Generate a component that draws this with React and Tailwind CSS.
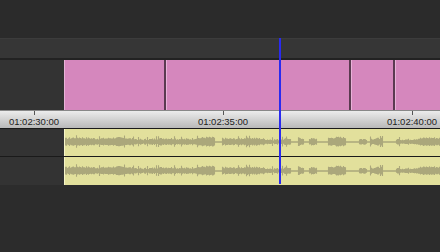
import React from 'react';

// quiet stretches of the clip, in px from the clip's left edge
const quiet = [
  [150, 156], [226, 232], [239, 243], [252, 262], [281, 293], [302, 304], [318, 330],
];

function wave(seed, n) {
  const out = [];
  let s = seed;
  for (let i = 0; i < n; i++) {
    s = (s * 9301 + 49297) % 233280;
    const r = s / 233280;
    const env = 2.6 + Math.sin(i / 7) * 0.6 + Math.sin(i / 19) * 0.5;
    const q = quiet.some(([a, b]) => i >= a && i <= b);
    out.push(q ? 0.8 : env + r * 1.8 + (r > 0.93 ? 1.5 : 0));
  }
  return out;
}

function Waveform({ seed }) {
  const bars = wave(seed, 376);
  const d = bars.map((h, i) => `M${i + 0.5} ${13 - h}V${13 + h * 0.85}`).join('');
  return (
    <svg width="376" height="27" className="block">
      <path d={d} stroke="#aba77b" strokeWidth="1.1" />
    </svg>
  );
}

function Clip({ w, last }) {
  return (
    <div
      className={`h-full bg-[#d587bd] border-l border-[#e8b2d8] ${last ? 'flex-1' : 'border-r-2 border-r-[#5a3a50]'}`}
      style={last ? undefined : { width: w }}
    />
  );
}

function AudioTrack({ seed, border }) {
  return (
    <div className={`flex h-[28px] ${border ? 'border-b border-[#1a1a1a]' : ''}`}>
      <div className="w-[64px] bg-[#333333]" />
      <div className="flex-1 bg-[#e2e09c] border-l border-[#f6f5c8] flex items-center overflow-hidden">
        <Waveform seed={seed} />
      </div>
    </div>
  );
}

export default function App() {
  const labels = [
    { x: 34, t: '01:02:30:00' },
    { x: 223, t: '01:02:35:00' },
    { x: 412, t: '01:02:40:00' },
  ];
  return (
    <div className="relative w-[440px] h-[252px] bg-[#2c2c2c] overflow-hidden font-['Liberation_Sans',Arial,sans-serif]">
      <div className="h-[38px] bg-[#2b2b2b]" />
      <div className="h-[20px] bg-[#363636] border-t border-[#3c3c3c]" />
      <div className="h-[2px] bg-[#222222]" />
      <div className="flex h-[50px]">
        <div className="w-[64px] bg-[#333333]" />
        <div className="flex flex-1">
          <Clip w={102} />
          <Clip w={185} />
          <Clip w={44} />
          <Clip last />
        </div>
      </div>
      <div className="relative h-[18px] bg-gradient-to-b from-[#ececec] to-[#b9b9b9] border-t border-[#888]">
        {labels.map((l) => (
          <React.Fragment key={l.t}>
            <div className="absolute top-0 w-px h-[4px] bg-[#555]" style={{ left: l.x }} />
            <span
              className="absolute top-[5px] text-[9.5px] leading-[11px] text-[#222] -translate-x-1/2"
              style={{ left: l.x }}
            >
              {l.t}
            </span>
          </React.Fragment>
        ))}
      </div>
      <div className="border-t border-[#1a1a1a]">
        <AudioTrack seed={17} border />
        <AudioTrack seed={17} />
      </div>
      <div className="absolute top-[38px] left-[279px] w-[2px] h-[146px] bg-[#2a2af0]" />
    </div>
  );
}
